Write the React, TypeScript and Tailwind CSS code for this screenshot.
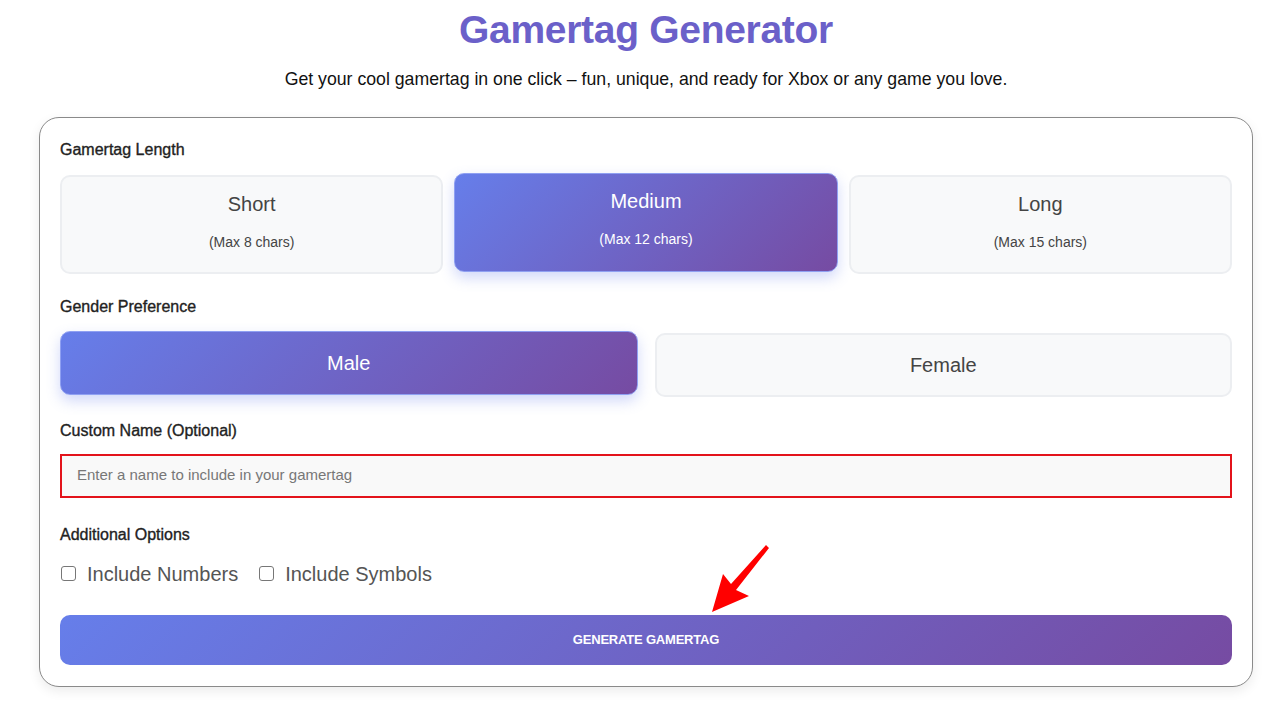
export default function App() {
  const lengths = [
    { name: "Short", sub: "(Max 8 chars)", active: false },
    { name: "Medium", sub: "(Max 12 chars)", active: true },
    { name: "Long", sub: "(Max 15 chars)", active: false },
  ];
  return (
    <div className="w-[1280px] h-[704px] overflow-hidden bg-white font-['Liberation_Sans',Arial,sans-serif] text-[#222]">
      <div className="ml-[39px] w-[1214px]">
        <h1 className="text-center text-[39px] font-bold text-[#6b60c9] leading-none pt-[10px] tracking-[-0.3px]">
          Gamertag Generator
        </h1>
        <p className="text-center text-[17.7px] text-[#111] mt-[22px] leading-none">
          Get your cool gamertag in one click – fun, unique, and ready for Xbox or any game you love.
        </p>
      </div>
      <div className="relative mx-[39px] mt-[28px] w-[1214px] h-[570px] rounded-[20px] border border-[#8a8a8a] bg-white shadow-[0_4px_12px_rgba(0,0,0,0.08)] px-[20px] pt-[24px]">
        <div className="text-[16px] text-[#222] leading-none [-webkit-text-stroke:0.35px]">Gamertag Length</div>
        <div className="grid grid-cols-3 gap-[11px] mt-[17px]">
          {lengths.map((l) =>
            l.active ? (
              <div
                key={l.name}
                className="h-[99px] -mt-[2px] rounded-[10px] border border-[#8fa0f2] bg-[linear-gradient(135deg,#667eea_0%,#764ba2_100%)] shadow-[0_6px_14px_rgba(102,126,234,0.3)] flex flex-col items-center text-white"
              >
                <div className="text-[20px] mt-[17px] leading-none">{l.name}</div>
                <div className="text-[14px] mt-[21px] leading-none">{l.sub}</div>
              </div>
            ) : (
              <div
                key={l.name}
                className="h-[99px] rounded-[10px] border-2 border-[#eceef1] bg-[#f8f9fa] flex flex-col items-center text-[#444]"
              >
                <div className="text-[20px] mt-[17px] leading-none">{l.name}</div>
                <div className="text-[14px] mt-[21px] leading-none">{l.sub}</div>
              </div>
            )
          )}
        </div>
        <div className="text-[16px] text-[#222] leading-none mt-[25px] [-webkit-text-stroke:0.35px]">Gender Preference</div>
        <div className="grid grid-cols-2 gap-[17px] mt-[18px]">
          <div className="h-[64px] -mt-[2px] rounded-[10px] border border-[#8fa0f2] bg-[linear-gradient(135deg,#667eea_0%,#764ba2_100%)] shadow-[0_6px_14px_rgba(102,126,234,0.3)] flex items-center justify-center text-white text-[20px]">
            Male
          </div>
          <div className="h-[64px] rounded-[10px] border-2 border-[#eceef1] bg-[#f8f9fa] flex items-center justify-center text-[#444] text-[20px]">
            Female
          </div>
        </div>
        <div className="text-[16px] text-[#222] leading-none mt-[26px] [-webkit-text-stroke:0.35px]">Custom Name (Optional)</div>
        <div className="mt-[15px] h-[44px] border-2 border-[#e3131b] bg-[#f9f9f9] flex items-center px-[15px] text-[15px] text-[#777]">
          Enter a name to include in your gamertag
        </div>
        <div className="text-[16px] text-[#222] leading-none mt-[29px] [-webkit-text-stroke:0.35px]">Additional Options</div>
        <div className="flex items-center mt-[21px] text-[20px] text-[#555] leading-none">
          <span className="w-[15px] h-[15px] border border-[#777] rounded-[3px] bg-white ml-[1px] mr-[11px]" />
          <span>Include Numbers</span>
          <span className="w-[15px] h-[15px] border border-[#777] rounded-[3px] bg-white ml-[21px] mr-[11px]" />
          <span>Include Symbols</span>
        </div>
        <div className="mt-[31px] h-[50px] rounded-[10px] bg-[linear-gradient(135deg,#667eea_0%,#764ba2_100%)] flex items-center justify-center text-white text-[13px] font-bold tracking-[-0.2px]">
          GENERATE GAMERTAG
        </div>
        <svg className="absolute left-[650px] top-[418px]" width="100" height="85" viewBox="0 0 100 85">
          <polygon points="22,76 33,38 41,48 76,9 79,12 46,54 59,60" fill="#f00" />
        </svg>
      </div>
    </div>
  );
}
